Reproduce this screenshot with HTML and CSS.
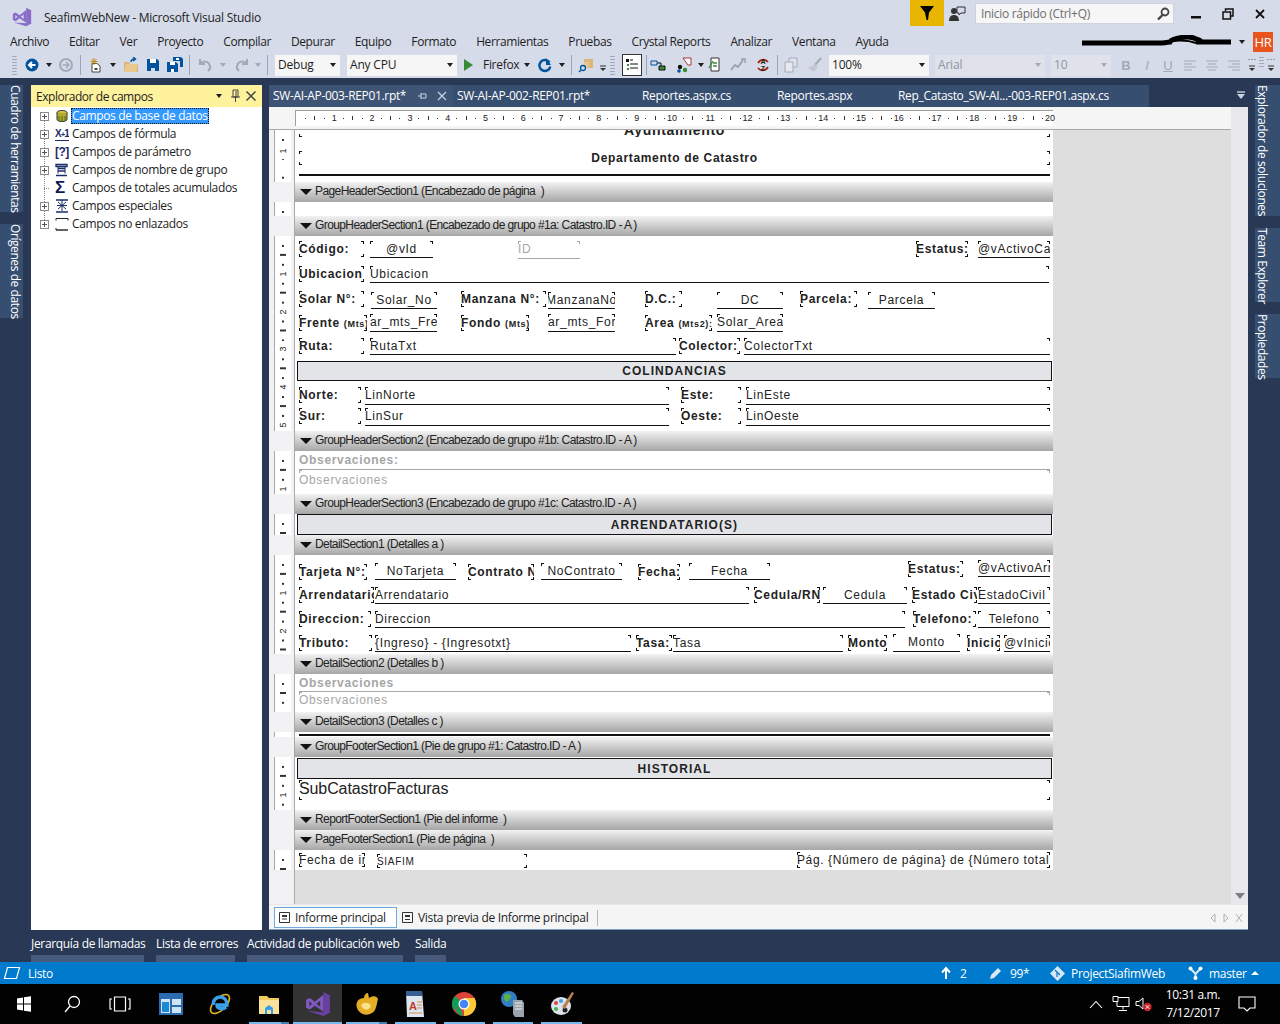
FILE: index.html
```html
<!DOCTYPE html>
<html lang="es">
<head>
<meta charset="utf-8">
<title>SeafimWebNew - Microsoft Visual Studio</title>
<link rel="stylesheet" href="styles.css">
</head>
<body>
<div class="app">
  <header class="titlebar">
    <svg class="vslogo" width="20" height="20" viewBox="0 0 24 24"><path fill="#8a6cc9" d="M17 1l6 3v16l-6 3L2 18.5l15 1z"/><path fill="#8a6cc9" fill-rule="evenodd" d="M1 8l3.500-1.500L9 10l8-6.500V19l-8-5.500L4.500 17 1 15.500zM4 9.500v4.500l2.500-2.300zM10.500 11.800l3.500 2.700V9z"/></svg>
    <span class="apptitle">SeafimWebNew - Microsoft Visual Studio</span>
    <div class="filterbox"><svg width="14" height="14" viewBox="0 0 14 14"><path d="M0 0h14L9 6.500 8 14H6.500L5 6.500z"/></svg></div>
    <svg class="feedback" width="18" height="18" viewBox="0 0 18 18"><circle cx="6" cy="6" r="3" fill="#333"/><path d="M1 16c0-4 2-6 5-6s5 2 5 6z" fill="#333"/><path d="M9 2h8v6h-4l-2 2V8H9z" fill="#d6dbe9" stroke="#333"/></svg>
    <div class="quick"><span>Inicio rápido (Ctrl+Q)</span><svg width="14" height="14" viewBox="0 0 14 14"><circle cx="9" cy="5" r="3.500" fill="none" stroke="#444" stroke-width="1.800"/><path d="M6.500 8L2 12.500" stroke="#444" stroke-width="2.400"/></svg></div>
    <div class="winbtns">
      <svg width="12" height="12" viewBox="0 0 12 12"><rect x="1" y="8" width="10" height="2.500" fill="#111"/></svg>
      <svg width="12" height="12" viewBox="0 0 12 12"><path d="M3.500 3V1h7.500v7H8.500M1 4h7.500v7H1z" fill="none" stroke="#111" stroke-width="1.500"/></svg>
      <svg width="12" height="12" viewBox="0 0 12 12"><path d="M2 2l8 8M10 2l-8 8" stroke="#111" stroke-width="1.800"/></svg>
    </div>
  </header>

  <nav class="menubar">
    <span>Archivo</span><span>Editar</span><span>Ver</span><span>Proyecto</span><span>Compilar</span><span>Depurar</span><span>Equipo</span><span>Formato</span><span>Herramientas</span><span>Pruebas</span><span>Crystal Reports</span><span>Analizar</span><span>Ventana</span><span>Ayuda</span>
    <div class="account">
      <svg width="152" height="14" viewBox="0 0 152 14"><path d="M1 8h80c6 0 4-1 8-1 2-4 20-7 26-3 4 1 8 3 0 3h35" fill="none" stroke="#000" stroke-width="5"/><path d="M83 9c10-5 24-4 32-1" fill="none" stroke="#000" stroke-width="2"/></svg>
      <i class="caret dk"></i>
      <b class="hr">HR</b>
    </div>
  </nav>

  <div class="toolbar">
    <i class="grip"></i>
    <svg class="m7" width="16" height="16" viewBox="0 0 16 16"><circle cx="8" cy="8" r="6.500" fill="#00539c"/><path d="M11.500 8H6M8 5L5 8l3 3" fill="none" stroke="#fff" stroke-width="2"/></svg>
    <i class="caret dk m5"></i>
    <svg class="m5" width="16" height="16" viewBox="0 0 16 16"><circle cx="8" cy="8" r="6" fill="none" stroke="#a3a9b8" stroke-width="2"/><path d="M4.500 8H10M8 5l3 3-3 3" fill="none" stroke="#a3a9b8" stroke-width="1.500"/></svg>
    <i class="sep m6"></i>
    <svg class="m7" width="16" height="16" viewBox="0 0 16 16"><path d="M4 6.500h5l3 2.500v6H4z" fill="#fff" stroke="#444"/><path d="M6 1v7M2.500 4.500h7M3.500 2l5 5M8.500 2l-5 5" stroke="#c08f1c"/><path d="M6.500 11h3v2h-3z" fill="#444"/></svg>
    <i class="caret dk m5"></i>
    <svg class="m6" width="16" height="16" viewBox="0 0 16 16"><path d="M1 5h5l1 2h8v8H1z" fill="#dcb67a"/><path d="M3 7h12l-2 8H1z" fill="#e8c88f"/><path d="M8 5c0-2 2-3 4-3M10 0l2.500 2L10 4" fill="none" stroke="#00539c" stroke-width="1.400"/></svg>
    <svg class="m6" width="16" height="16" viewBox="0 0 16 16"><path d="M2 2h10l2 2v10H2z" fill="#00539c"/><path d="M5 2h6v4H5z" fill="#fff"/><path d="M6 11h4v3H6z" fill="#d6dbe9"/></svg>
    <svg class="m6" width="16" height="16" viewBox="0 0 16 16"><path d="M6 0h8l2 2v8h-3V4H6z" fill="#00539c"/><path d="M0 5h9l2 2v8H0z" fill="#00539c"/><path d="M3 5h5v3H3zM4 12h3v3H4zM9 1h3v2H9z" fill="#fff"/></svg>
    <i class="sep m6"></i>
    <svg class="m7" width="16" height="16" viewBox="0 0 16 16"><path d="M3 2v5h5M3 7c3-4 9-3 10 2 .5 2-.5 4-2 5" fill="none" stroke="#a3a9b8" stroke-width="2"/></svg>
    <i class="caret gr m6"></i>
    <svg class="m7" width="16" height="16" viewBox="0 0 16 16"><path d="M13 2v5H8M13 7C10 3 4 4 3 9c-.5 2 .5 4 2 5" fill="none" stroke="#a3a9b8" stroke-width="2"/></svg>
    <i class="caret gr m4"></i>
    <i class="sep m5"></i>
    <div class="combo m7 w65"><span>Debug</span><i class="caret dk"></i></div>
    <div class="combo m7 w110"><span>Any CPU</span><i class="caret dk"></i></div>
    <svg class="m4" width="14" height="16" viewBox="0 0 14 16"><path d="M3 2l9 6-9 6z" fill="#388a34"/></svg>
    <span class="tbtext m8">Firefox</span>
    <i class="caret dk m4"></i>
    <svg class="m6" width="16" height="16" viewBox="0 0 16 16"><path d="M12.500 5.500a5.500 5.500 0 1 0 .8 4" fill="none" stroke="#00539c" stroke-width="2.400"/><path d="M9 1v7h5z" fill="#00539c"/></svg>
    <i class="caret dk m5"></i>
    <i class="sep m5"></i>
    <svg class="m6" width="16" height="16" viewBox="0 0 16 16"><path d="M6 2h9v9H9V6H6z" fill="#dcb67a"/><path d="M6 5h5v5H6z" fill="#e8c88f"/><circle cx="5" cy="11" r="2.500" fill="none" stroke="#00539c" stroke-width="1.300"/><path d="M3 13l-2 2" stroke="#00539c" stroke-width="1.500"/></svg>
    <svg class="m5" width="8" height="16" viewBox="0 0 8 16"><path d="M1 9h6" stroke="#333"/><path d="M1 11h6l-3 3z" fill="#333"/></svg>
    <i class="grip m3"></i>
    <div class="toggle m7"><svg width="14" height="14" viewBox="0 0 14 14"><path d="M1 1h3v3H1z" fill="#111"/><path d="M5 2h3M5 6h8M5 10h8" stroke="#111"/><path d="M2 6h2v2H2zM2 10h2v2H2z" fill="#388a34"/></svg></div>
    <i class="sep m4"></i>
    <svg class="m3" width="16" height="16" viewBox="0 0 16 16"><path d="M1 4h6v4H1z" fill="none" stroke="#00539c"/><path d="M9 9h6v4H9z" fill="#388a34" stroke="#111"/><path d="M7 6h4v3" fill="none" stroke="#111"/></svg>
    <svg class="m10" width="16" height="16" viewBox="0 0 16 16"><path d="M7 1h8v7h-3z" fill="#fff" stroke="#a33"/><circle cx="4" cy="10" r="2.200" fill="#111"/><circle cx="9" cy="13" r="2.200" fill="#388a34"/><circle cx="3" cy="14" r="1.800" fill="#00539c"/></svg>
    <i class="caret dk m5"></i>
    <svg class="m2" width="16" height="16" viewBox="0 0 16 16"><path d="M4 1h8v13H4z" fill="#fff" stroke="#333"/><path d="M2 11l4-7M6 6h4M6 9h4" stroke="#388a34" stroke-width="1.300"/></svg>
    <svg class="m7" width="16" height="16" viewBox="0 0 16 16"><path d="M1 13l4-5 3 2 5-7" fill="none" stroke="#9ba2b2" stroke-width="2"/><path d="M11 2h4v4" fill="none" stroke="#9ba2b2" stroke-width="1.500"/></svg>
    <svg class="m9" width="16" height="16" viewBox="0 0 16 16"><path d="M3 6a6 6 0 0 1 10-1M13 10a6 6 0 0 1-10 1" fill="none" stroke="#a1260d" stroke-width="1.800"/><text x="8" y="7" class="azt">A</text><text x="8" y="14" class="azt">Z</text></svg>
    <i class="sep m6"></i>
    <svg class="m5" width="16" height="16" viewBox="0 0 16 16"><path d="M6 1h8v9H6z" fill="#e0e3ea" stroke="#a3a9b8"/><path d="M2 5h8v10H2z" fill="#e8e9ee" stroke="#a3a9b8"/></svg>
    <svg class="m8" width="16" height="16" viewBox="0 0 16 16"><path d="M14 1L8 8" stroke="#a3a9b8" stroke-width="2"/><path d="M8 7l3 3-4 5-6-4z" fill="#c4c8d2"/></svg>
    <div class="combo m6 w100"><span>100%</span><i class="caret dk"></i></div>
    <div class="combo off m6 w110"><span>Arial</span><i class="caret gr"></i></div>
    <div class="combo off m6 w60"><span>10</span><i class="caret gr"></i></div>
    <b class="fmt m8">B</b><em class="fmt m7">I</em><u class="fmt m7">U</u>
    <svg class="m8" width="14" height="12" viewBox="0 0 14 12"><path d="M1 2h12M1 5h8M1 8h12M1 11h8" stroke="#a3a9b8"/></svg>
    <svg class="m8" width="14" height="12" viewBox="0 0 14 12"><path d="M1 2h12M3 5h8M1 8h12M3 11h8" stroke="#a3a9b8"/></svg>
    <svg class="m8" width="14" height="12" viewBox="0 0 14 12"><path d="M1 2h12M5 5h8M1 8h12M5 11h8" stroke="#a3a9b8"/></svg>
    <svg class="m7" width="8" height="16" viewBox="0 0 8 16"><path d="M1 2v1M4 2v1M7 2v1" stroke="#555"/><path d="M1 9h6" stroke="#333"/><path d="M1 11h6l-3 3z" fill="#333"/></svg>
    <i class="grip short m3"></i>
    <svg class="m3" width="8" height="16" viewBox="0 0 8 16"><path d="M1 2v1M4 2v1M7 2v1" stroke="#555"/><path d="M1 9h6" stroke="#333"/><path d="M1 11h6l-3 3z" fill="#333"/></svg>
  </div>

  <main class="main">
    <aside class="leftstrip">
      <div class="vtab t1"><span>Cuadro de herramientas</span></div>
      <div class="vtab t2"><span>Orígenes de datos</span></div>
    </aside>

    <section class="panel">
      <div class="panelhead">
        <span>Explorador de campos</span>
        <i class="caret dk headcaret"></i>
        <svg width="12" height="14" viewBox="0 0 12 14"><path d="M4 1h5v7H4zM2 8h9M6.500 8v5M7 2v6" fill="none" stroke="#444"/></svg>
        <svg width="12" height="12" viewBox="0 0 12 12"><path d="M1.500 1.500l9 9M10.500 1.500l-9 9" stroke="#444" stroke-width="1.500"/></svg>
      </div>
      <ul class="tree">
        <li><i class="exp"></i><svg class="ticon" width="14" height="14" viewBox="0 0 14 14"><ellipse cx="7" cy="3.500" rx="5" ry="2" fill="#e5d34e" stroke="#333"/><path d="M2 3.500v7c0 1 2 2 5 2s5-1 5-2v-7" fill="#b5a92d" stroke="#333"/><path d="M4 7v5M7 7v6M10 7v5" stroke="#3c6e25"/></svg><span class="tlabel sel">Campos de base de datos</span></li>
        <li><i class="exp"></i><span class="ticon tx xp">X<small>+</small>1</span><span class="tlabel">Campos de fórmula</span></li>
        <li><i class="exp"></i><span class="ticon tx">[?]</span><span class="tlabel">Campos de parámetro</span></li>
        <li><i class="exp"></i><svg class="ticon" width="14" height="14" viewBox="0 0 14 14"><path d="M1 1.500h11v2H1zM3 5.500h7M3 8h7M1 12.500h11" fill="none" stroke="#1a2c66" stroke-width="1.300"/><path d="M3 3.500v7M10 3.500v7" stroke="#1a2c66"/></svg><span class="tlabel">Campos de nombre de grupo</span></li>
        <li class="noexp"><i class="noexpbox"></i><span class="ticon tx sigma">Σ</span><span class="tlabel">Campos de totales acumulados</span></li>
        <li><i class="exp"></i><svg class="ticon" width="14" height="14" viewBox="0 0 14 14"><path d="M7 1v11M2 6.500h10M3 3l8 7M11 3l-8 7" stroke="#1a2c66"/><path d="M1 1h12M1 13h12" stroke="#1a2c66" stroke-width="1.300"/></svg><span class="tlabel">Campos especiales</span></li>
        <li><i class="exp"></i><svg class="ticon" width="14" height="14" viewBox="0 0 14 14"><path d="M1 13h12" stroke="#222" stroke-width="1.400"/><path d="M1 1.500h12M13 1.500v2M1 1.500v2M1 11v2" fill="none" stroke="#222"/></svg><span class="tlabel">Campos no enlazados</span></li>
      </ul>
    </section>

    <section class="editor">
      <div class="tabs">
        <div class="tab active w184"><span>SW-AI-AP-003-REP01.rpt*</span><svg class="pin" width="10" height="10" viewBox="0 0 10 10"><path d="M3 2v6M3 3h5v4H3M0 5h3" fill="none" stroke="#c9d3e4"/></svg><svg class="tabx" width="10" height="10" viewBox="0 0 10 10"><path d="M1 1l8 8M9 1L1 9" stroke="#c9d3e4" stroke-width="1.200"/></svg></div>
        <div class="tab w185"><span>SW-AI-AP-002-REP01.rpt*</span></div>
        <div class="tab w135"><span>Reportes.aspx.cs</span></div>
        <div class="tab w121"><span>Reportes.aspx</span></div>
        <div class="tab w255"><span>Rep_Catasto_SW-AI...-003-REP01.aspx.cs</span></div>
        <svg class="taboverflow" width="10" height="10" viewBox="0 0 10 10"><path d="M1 2h8" stroke="#c9d3e4" stroke-width="1.400"/><path d="M1 4h8L5 9z" fill="#c9d3e4"/></svg>
      </div>
      <div class="edbody">
        <div class="surface">
          <div class="hruler-row">
            <div class="hruler">
              <span>1</span><span>2</span><span>3</span><span>4</span><span>5</span><span>6</span><span>7</span><span>8</span><span>9</span><span>10</span><span>11</span><span>12</span><span>13</span><span>14</span><span>15</span><span>16</span><span>17</span><span>18</span><span>19</span><span>20</span>
            </div>
          </div>

          <div class="row">
            <div class="rul"><div class="vr h52"><b class="d d1first">1</b></div></div>
            <div class="body h52">
              <div class="f lb ctr title f-ayu"><span>Ayuntamiento</span></div>
              <div class="f lb ctr f-depto"><span>Departamento de Catastro</span></div>
              <div class="hline f-hl1"></div>
            </div>
          </div>

          <div class="row"><div class="rul"></div><div class="bar"><i></i>PageHeaderSection1 (Encabezado de página &nbsp;)</div></div>
          <div class="row"><div class="rul"><div class="vr h14"></div></div><div class="body h14"></div></div>

          <div class="row"><div class="rul"></div><div class="bar"><i></i>GroupHeaderSection1 (Encabezado de grupo #1a: Catastro.ID - A )</div></div>
          <div class="row">
            <div class="rul"><div class="vr h195"><b class="d d1">1</b><b class="d d2">2</b><b class="d d3">3</b><b class="d d4">4</b><b class="d d5">5</b></div></div>
            <div class="body h195">
              <div class="f lb a1">Código:</div><div class="f v ctr a2"><span>@vId</span></div>
              <div class="f v off a3">ID</div>
              <div class="f lb a4">Estatus:</div><div class="f v a5">@vActivoCa</div>
              <div class="f lb b1">Ubicacion</div><div class="f v b2">Ubicacion</div>
              <div class="f lb c1">Solar N°:</div><div class="f v ctr c2"><span>Solar_No</span></div>
              <div class="f lb c3">Manzana N°:</div><div class="f v ctr c4"><span>ManzanaNo</span></div>
              <div class="f lb c5">D.C.:</div><div class="f v ctr c6"><span>DC</span></div>
              <div class="f lb c7">Parcela:</div><div class="f v ctr c8"><span>Parcela</span></div>
              <div class="f lb d1f">Frente <small>(Mts)</small></div><div class="f v d2f">ar_mts_Fre</div>
              <div class="f lb d3f">Fondo <small>(Mts)</small></div><div class="f v d4f">ar_mts_For</div>
              <div class="f lb d5f">Area <small>(Mts2):</small></div><div class="f v d6f">Solar_Area</div>
              <div class="f lb e1">Ruta:</div><div class="f v e2">RutaTxt</div>
              <div class="f lb e3">Colector:</div><div class="f v e4">ColectorTxt</div>
              <div class="hbox hb1">COLINDANCIAS</div>
              <div class="f lb g1">Norte:</div><div class="f v g2">LinNorte</div>
              <div class="f lb g3">Este:</div><div class="f v g4">LinEste</div>
              <div class="f lb h1">Sur:</div><div class="f v h2">LinSur</div>
              <div class="f lb h3">Oeste:</div><div class="f v h4">LinOeste</div>
            </div>
          </div>

          <div class="row"><div class="rul"></div><div class="bar"><i></i>GroupHeaderSection2 (Encabezado de grupo #1b: Catastro.ID - A )</div></div>
          <div class="row">
            <div class="rul"><div class="vr h43"><b class="d d1">1</b></div></div>
            <div class="body h43">
              <div class="f lb off nobox i1">Observaciones:</div>
              <div class="f v off i2">Observaciones</div>
            </div>
          </div>

          <div class="row"><div class="rul"></div><div class="bar"><i></i>GroupHeaderSection3 (Encabezado de grupo #1c: Catastro.ID - A )</div></div>
          <div class="row">
            <div class="rul"><div class="vr h21"></div></div>
            <div class="body h21"><div class="hbox hb2">ARRENDATARIO(S)</div></div>
          </div>

          <div class="row"><div class="rul"></div><div class="bar"><i></i>DetailSection1 (Detalles a )</div></div>
          <div class="row">
            <div class="rul"><div class="vr h99"><b class="d d1">1</b><b class="d d2">2</b></div></div>
            <div class="body h99">
              <div class="f lb j1">Tarjeta N°:</div><div class="f v ctr j2"><span>NoTarjeta</span></div>
              <div class="f lb j3">Contrato N</div><div class="f v ctr j4"><span>NoContrato</span></div>
              <div class="f lb j5">Fecha:</div><div class="f v ctr j6"><span>Fecha</span></div>
              <div class="f lb j7">Estatus:</div><div class="f v j8">@vActivoArr</div>
              <div class="f lb k1">Arrendatario</div><div class="f v k2">Arrendatario</div>
              <div class="f lb k3">Cedula/RN</div><div class="f v ctr k4"><span>Cedula</span></div>
              <div class="f lb k5">Estado Civ</div><div class="f v k6">EstadoCivil</div>
              <div class="f lb l1">Direccion:</div><div class="f v l2">Direccion</div>
              <div class="f lb l3">Telefono:</div><div class="f v ctr l4"><span>Telefono</span></div>
              <div class="f lb n1">Tributo:</div><div class="f v n2">{Ingreso} - {Ingresotxt}</div>
              <div class="f lb n3">Tasa:</div><div class="f v n4">Tasa</div>
              <div class="f lb n5">Monto</div><div class="f v ctr n6"><span>Monto</span></div>
              <div class="f lb n7">Inicio</div><div class="f v n8">@vInicio</div>
            </div>
          </div>

          <div class="row"><div class="rul"></div><div class="bar"><i></i>DetailSection2 (Detalles b )</div></div>
          <div class="row">
            <div class="rul"><div class="vr h38"></div></div>
            <div class="body h38">
              <div class="f lb off nobox o1">Observaciones</div>
              <div class="f v off o2">Observaciones</div>
            </div>
          </div>

          <div class="row"><div class="rul"></div><div class="bar"><i></i>DetailSection3 (Detalles c )</div></div>
          <div class="row">
            <div class="rul"><div class="vr h5"></div></div>
            <div class="body h5"><div class="hline f-hl2"></div></div>
          </div>

          <div class="row"><div class="rul"></div><div class="bar"><i></i>GroupFooterSection1 (Pie de grupo #1: Catastro.ID - A )</div></div>
          <div class="row">
            <div class="rul"><div class="vr h53"><b class="d d1">1</b></div></div>
            <div class="body h53">
              <div class="hbox hb3">HISTORIAL</div>
              <div class="f big p1">SubCatastroFacturas</div>
            </div>
          </div>

          <div class="row"><div class="rul"></div><div class="bar"><i></i>ReportFooterSection1 (Pie del informe &nbsp;)</div></div>
          <div class="row"><div class="rul"></div><div class="bar"><i></i>PageFooterSection1 (Pie de página &nbsp;)</div></div>
          <div class="row">
            <div class="rul"><div class="vr h20"></div></div>
            <div class="body h20">
              <div class="f q1">Fecha de ir</div>
              <div class="f tiny q2">SIAFIM</div>
              <div class="f q3">Pág. {Número de página} de {Número total</div>
            </div>
          </div>

          <div class="filler"><div class="rul"></div></div>
        </div>
        <div class="vscroll"><i></i></div>
      </div>
      <div class="edfoot">
        <div class="ftab on"><svg width="11" height="11" viewBox="0 0 11 11"><path d="M.5.500h10v10H.5z" fill="none" stroke="#333"/><path d="M3 7h5" stroke="#333"/><path d="M3 3h5v2H3z" fill="#333"/></svg><span>Informe principal</span></div>
        <div class="ftab"><svg width="11" height="11" viewBox="0 0 11 11"><path d="M.5.500h10v10H.5z" fill="none" stroke="#333"/><path d="M3 3h5v2H3zM3 7h5v1H3z" fill="#333"/></svg><span>Vista previa de Informe principal</span></div>
        <i class="fsep"></i>
        <div class="fnav">
          <svg width="8" height="10" viewBox="0 0 8 10"><path d="M6 1L2 5l4 4z" fill="none" stroke="#b0b0b8"/></svg>
          <svg width="8" height="10" viewBox="0 0 8 10"><path d="M2 1l4 4-4 4z" fill="none" stroke="#b0b0b8"/></svg>
          <svg width="8" height="10" viewBox="0 0 8 10"><path d="M1 1l6 8M7 1L1 9" stroke="#b0b0b8"/></svg>
        </div>
      </div>
    </section>

    <aside class="rightstrip">
      <div class="vtab r1"><span>Explorador de soluciones</span></div>
      <div class="vtab r2"><span>Team Explorer</span></div>
      <div class="vtab r3"><span>Propiedades</span></div>
    </aside>
  </main>

  <div class="dock">
    <div class="dtab w113">Jerarquía de llamadas</div>
    <div class="dtab w79">Lista de errores</div>
    <div class="dtab w156">Actividad de publicación web</div>
    <div class="dtab w31">Salida</div>
  </div>

  <footer class="status">
    <svg width="18" height="14" viewBox="0 0 18 14"><path d="M4.500 1.500h12l-3 11h-12z" fill="none" stroke="#fff" stroke-width="1.200"/></svg>
    <span class="listo">Listo</span>
    <div class="stright">
      <svg width="12" height="14" viewBox="0 0 12 14"><path d="M6 13V3M2 6.500L6 2l4 4.500" fill="none" stroke="#fff" stroke-width="2"/></svg>
      <span class="s2">2</span>
      <svg class="s3" width="12" height="12" viewBox="0 0 12 12"><path d="M0 12l1-4 7-7 3 3-7 7z" fill="#d8e8f5"/></svg>
      <span class="s4">99*</span>
      <svg class="s5" width="15" height="15" viewBox="0 0 15 15"><path d="M7.500 0l7.500 7.500-7.500 7.500L0 7.500z" fill="#d8e8f5"/><path d="M5 4l5 5M7 6v5" stroke="#007acc" stroke-width="1.200"/></svg>
      <span class="s6">ProjectSiafimWeb</span>
      <svg class="s7" width="15" height="14" viewBox="0 0 15 14"><path d="M2.500 2.500L7.500 8l5-5.500M7.500 8v4" fill="none" stroke="#d8e8f5" stroke-width="2"/><circle cx="2.500" cy="2.500" r="2" fill="#fff"/><circle cx="12.500" cy="2.500" r="2" fill="#fff"/><circle cx="7.500" cy="12" r="2" fill="#fff"/></svg>
      <span class="s8">master</span>
      <i class="uptri"></i>
    </div>
  </footer>

  <div class="taskbar">
    <div class="tk w48"><svg width="20" height="20" viewBox="0 0 20 20"><path d="M3 4.500l6-1v6H3zM10 3.300l7-1.100v7.300h-7zM3 10.500h6v6l-6-1zM10 10.500h7v7.300l-7-1.100z" fill="#fff"/></svg></div>
    <div class="tk w48"><svg width="20" height="20" viewBox="0 0 20 20"><circle cx="12" cy="8" r="5.500" fill="none" stroke="#fff" stroke-width="1.300"/><path d="M8 12l-5 6" stroke="#fff" stroke-width="1.300"/></svg></div>
    <div class="tk w48"><svg width="22" height="18" viewBox="0 0 22 18"><path d="M5.500 2h11v14h-11zM3 4H1v10h2M19 4h2v10h-2" fill="none" stroke="#fff" stroke-width="1.200"/></svg></div>
    <div class="tk w49 first"><svg width="24" height="22" viewBox="0 0 24 22"><path d="M0 0h24v22H0z" fill="#2b6cb0"/><path d="M2 6h9v14H2zM13 6h9v6h-9zM13 14h9v6h-9z" fill="#cfe4f7"/><path d="M3 9h7v10H3z" fill="#1b8ad3"/></svg></div>
    <div class="tk w49"><svg width="26" height="26" viewBox="0 0 26 26"><ellipse cx="13" cy="13" rx="12" ry="6" transform="rotate(-45 13 13)" fill="none" stroke="#e6b422" stroke-width="1.600"/><path d="M6 14c0-5 3-8 7-8s7 3 7 8H10c0 4 6 5 9 2" fill="none" stroke="#3aa0e8" stroke-width="3.400"/></svg></div>
    <div class="tk w49 ul split"><svg width="24" height="24" viewBox="0 0 24 24"><path d="M2 4h8l2 2h10v16H2z" fill="#f0c95f"/><path d="M2 8h20v14H2z" fill="#fbe29b"/><path d="M8 22v-6l4-3 4 3v6z" fill="#3aa0e8"/><path d="M10 22v-4h4v4z" fill="#fbe29b"/></svg></div>
    <div class="tk w49 ul vsactive"><svg width="26" height="26" viewBox="0 0 24 24"><path fill="#68409f" d="M17 1l6 3v16l-6 3L2 18.500l15 1z"/><path fill="#7f58c0" fill-rule="evenodd" d="M1 8l3.500-1.500L9 10l8-6.500V19l-8-5.500L4.500 17 1 15.500zM4 9.500v4.500l2.500-2.300zM10.500 11.800l3.500 2.700V9z"/></svg></div>
    <div class="tk w49 ul split"><svg width="26" height="26" viewBox="0 0 26 26"><path d="M3 17c-2-6 2-10 7-10 0-3 2-5 4-5l1 5c4-3 8-2 9 1-2 8-2 13-8 15-6 2-11-1-13-6z" fill="#e5ad26"/><path d="M7 14c3-3 8-3 10 1-2 5-8 5-10-1z" fill="#f9e28a"/></svg></div>
    <div class="tk w49 ul"><svg width="24" height="28" viewBox="0 0 24 28"><path d="M3 1h16l2 26H4z" fill="#dbe6f2"/><path d="M3 1h16v5H3z" fill="#365f91"/><text x="6" y="20" class="docA">A</text><path d="M14 12h5M14 15h5M14 18h5M6 23h13" stroke="#e08a3c"/></svg></div>
    <div class="tk w49 ul"><svg width="26" height="26" viewBox="0 0 26 26"><circle cx="13" cy="13" r="12" fill="#db4437"/><path d="M13 13L2.600 19A12 12 0 0 1 4 5z" fill="#0f9d58"/><path d="M13 7h10.500A12 12 0 0 1 13 25z" fill="#fcc934"/><path d="M4 19l5-3 3 9c-3 0-6-3-8-6z" fill="#0f9d58"/><circle cx="13" cy="13" r="5.500" fill="#fff"/><circle cx="13" cy="13" r="4.300" fill="#4285f4"/></svg></div>
    <div class="tk w49 ul"><svg width="26" height="28" viewBox="0 0 26 28"><circle cx="9" cy="9" r="8" fill="#2f7fc1"/><path d="M4 5c3-2 6-1 7 1s-2 3-3 5-3 0-4-2z" fill="#5fae45"/><path d="M13 10h9l2 3v14h-9l-2-3z" fill="#9aa4ae"/><path d="M15 13h7M15 16h7M15 19h7" stroke="#eee"/></svg></div>
    <div class="tk w49 ul"><svg width="26" height="28" viewBox="0 0 26 28"><ellipse cx="12" cy="16" rx="10" ry="9" fill="#dde3ea"/><circle cx="7" cy="13" r="2" fill="#d64541"/><circle cx="12" cy="11" r="2" fill="#3aa0e8"/><circle cx="7" cy="19" r="2" fill="#4caf50"/><circle cx="16" cy="20" r="2.500" fill="#222"/><path d="M13 17L23 2l2 1-9 16z" fill="#b9824a"/></svg></div>
    <div class="tray">
      <svg width="14" height="9" viewBox="0 0 14 9"><path d="M1 8l6-6.500L13 8" fill="none" stroke="#fff" stroke-width="1.100"/></svg>
      <svg class="tr1" width="18" height="16" viewBox="0 0 18 16"><path d="M5 1.500h12v9H5z" fill="none" stroke="#fff"/><path d="M1 .5h5v5H1z" fill="#000" stroke="#fff"/><path d="M11 10.500v3M7 14.500h8" stroke="#fff"/></svg>
      <svg class="tr2" width="18" height="16" viewBox="0 0 18 16"><path d="M1 5.500h3L8 2v11L4 9.500H1z" fill="none" stroke="#fff"/><circle cx="12.500" cy="11" r="4.200" fill="#c8222a"/><path d="M10.700 9.200l3.600 3.600M14.300 9.200l-3.600 3.600" stroke="#fff"/></svg>
      <div class="clock"><span>10:31 a.m.</span><span>7/12/2017</span></div>
      <svg class="tr3" width="18" height="16" viewBox="0 0 18 16"><path d="M1 1h16v11h-5l-3 3-3-3H1z" fill="none" stroke="#fff" stroke-width="1.100"/></svg>
    </div>
  </div>
</div>
</body>
</html>
```

FILE: styles.css
```css
*{box-sizing:border-box}
html,body{margin:0;padding:0;overflow:hidden}
body{background:#000;font-family:"Open Sans","Noto Sans",sans-serif;font-size:12px;color:#1e1e1e}
i{display:block;font-style:normal}
svg{display:block;flex:none}
.app{width:1280px;height:1024px;display:flex;flex-direction:column;background:#d6dbe9}

/* title bar */
.titlebar{height:32px;display:flex;align-items:flex-start;padding-left:12px;flex:none}
.vslogo{margin-top:7px}
.apptitle{margin:10px 0 0 12px;letter-spacing:-.25px;line-height:16px;width:866px}
.filterbox{width:34px;height:26px;background:#e8b600;display:flex;align-items:center;justify-content:center}
.feedback{margin:5px 0 0 4px}
.quick{margin:3px 0 0 9px;width:199px;height:21px;background:#f6f6f6;border:1px solid #cfd3de;display:flex;align-items:center;justify-content:space-between;padding:0 3px 0 5px;color:#6d6d6d;letter-spacing:-.3px}
.winbtns{display:flex;gap:20px;margin:8px 0 0 16px}

/* menu */
.menubar{height:20px;display:flex;align-items:center;gap:20px;padding:0 0 2px 10px;flex:none;letter-spacing:-.4px}
.account{margin-left:auto;display:flex;align-items:center;gap:5px;margin-right:7px;margin-bottom:-2px}
.hr{width:20px;height:20px;background:#e8541e;color:#fff;font-weight:400;font-size:13px;text-align:center;line-height:20px;margin-left:2px}
.caret{width:8px;height:8px;position:relative;flex:none}
.caret::after{content:"";position:absolute;left:1px;top:2px;border:3px solid transparent;border-top:4px solid #1e1e1e;border-bottom:0}
.caret.gr::after{border-top-color:#a3a9b8}

/* toolbar */
.toolbar{height:26px;display:flex;align-items:center;padding-left:12px;flex:none}
.grip{width:5px;height:20px;background:radial-gradient(circle,#8a93a8 0 .7px,transparent 1px) 0 0/2.500px 3px}
.grip.short{height:12px;margin-top:-6px}
.sep{width:1px;height:20px;background:#9aa3b8}
.combo{height:21px;background:#f6f6f6;display:flex;align-items:center;justify-content:space-between;padding:0 3px 1px 3px;letter-spacing:-.2px;flex:none}
.combo.off{background:#dfe2ea;color:#8f95a3}
.w65{width:65px}.w110{width:110px}.w100{width:100px}.w60{width:60px}
.tbtext{width:36px;letter-spacing:-.3px;white-space:nowrap;margin-top:-1px}
.toggle{width:20px;height:22px;background:#fff;border:1px solid #333;display:flex;align-items:center;justify-content:center;flex:none}
.fmt{width:14px;text-align:center;color:#a3a9b8;font-size:13px;font-family:"Liberation Sans",sans-serif;flex:none}
.azt{font:bold 7px "Liberation Sans",sans-serif;text-anchor:middle;fill:#1e1e1e}
.m2{margin-left:2px}.m3{margin-left:3px}.m4{margin-left:4px}.m5{margin-left:5px}.m6{margin-left:6px}.m7{margin-left:7px}.m8{margin-left:8px}.m9{margin-left:9px}.m10{margin-left:10px}

/* main */
.main{height:852px;flex:none;display:flex;background:#293955;padding-top:7px}
.leftstrip{width:31px;flex:none;display:flex;flex-direction:column}
.rightstrip{width:32px;flex:none;display:flex;flex-direction:column;padding-left:7px}
.vtab{background:#364e6f;color:#fff;writing-mode:vertical-rl;display:flex;justify-content:flex-start;letter-spacing:-.42px;line-height:15px;white-space:nowrap}
.vtab span{display:block}
.t1{width:23px;height:127px;align-items:flex-start}
.t2{width:23px;height:94px;margin-top:12px;align-items:flex-start}
.r1,.r2,.r3{align-items:flex-end}
.r1{height:131px}.r2{height:74px;margin-top:12px}.r3{height:64px;margin-top:12px}

/* panel */
.panel{width:231px;flex:none;background:#fff;display:flex;flex-direction:column}
.panelhead{height:22px;background:#fff29d;display:flex;align-items:center;padding:0 5px;flex:none}
.panelhead span{width:179px;padding-top:1px;letter-spacing:-.45px}
.headcaret{margin-right:4px}
.panelhead svg{margin-left:2px}
.panelhead svg+svg{margin-left:4px}
.tree{list-style:none;margin:0;padding:0;position:relative}
.tree::before{content:"";position:absolute;left:13px;top:9px;bottom:9px;border-left:1px dotted #888}
.tree li{height:18px;display:flex;align-items:center;padding-left:9px;position:relative}
.exp{width:9px;height:9px;border:1px solid #8a8a8a;background:linear-gradient(#555,#555) center/5px 1px no-repeat,linear-gradient(#555,#555) center/1px 5px no-repeat,#fff;position:relative;flex:none}
.noexpbox{height:1px;border-top:1px dotted #888;flex:none;margin-left:4px;width:5px}
.ticon{margin-left:6px;width:14px;flex:none}
.tx{font:bold 12px/14px "Liberation Sans",sans-serif;color:#1a2c66;white-space:nowrap;letter-spacing:-.6px}
.xp{font-size:10px;border-bottom:1px solid #1a2c66;line-height:11px;letter-spacing:-.8px;overflow:hidden}
.xp small{font-size:7px}
.sigma{font-size:17px;line-height:16px;color:#0c1a52;letter-spacing:0}
.tlabel{margin-left:2px;padding:0 1px;letter-spacing:-.36px;line-height:16px;white-space:nowrap}
.tlabel.sel{background:#3399ff;color:#fff;outline:1px dotted #111;outline-offset:-1px}

/* editor */
.editor{width:979px;flex:none;display:flex;flex-direction:column;margin-left:7px}
.tabs{height:22px;flex:none;display:flex;align-items:center;position:relative;background:#293955;color:#fff;letter-spacing:-.33px}
.tab{height:22px;background:#364e6f;display:flex;align-items:center;padding:0 0 1px 4px;flex:none;white-space:nowrap}
.tab.active{background:#3e5475}
.w184{width:184px}.w185{width:185px}.w135{width:135px}.w121{width:121px}.w255{width:255px}
.tab span{width:136px;flex:none}
.pin{margin-left:9px}
.tabx{margin-left:9px}
.taboverflow{position:absolute;right:2px;top:5px}
.edbody{flex:1;display:flex;min-height:0}
.surface{width:962px;flex:none;background:#dedede;display:flex;flex-direction:column;overflow:hidden}
.vscroll{width:17px;flex:none;background:#e8e8ec;position:relative}
.vscroll i{position:absolute;left:4px;bottom:5px;border:5px solid transparent;border-top:6px solid #7b7f8a;border-bottom:0}
.hruler-row{height:23px;flex:none;background:#f5f5f5;padding:3px 0 0 26px;border-bottom:1px solid #a8a8a8;position:relative}
.hruler{width:758px;height:16px;background-color:#fff;border-top:1px solid #9e9e9e;border-left:1px solid #9e9e9e;display:flex;background-repeat:no-repeat;
  background-image:repeating-linear-gradient(90deg,transparent 0 8.950px,#333 8.950px 9.950px,transparent 9.950px 18.900px),repeating-linear-gradient(90deg,transparent 0 18.400px,#333 18.400px 19.400px,transparent 19.400px 37.800px);background-size:100% 1px,100% 4px;background-position:0 7px,0 5px}
.hruler span{width:37.8px;flex:none;text-align:right;font:9px/14px "Liberation Sans",sans-serif;color:#222;position:relative;left:3px}
.row{display:flex;flex:none}
.rul{width:26px;flex:none;background:#f2f2f4;border-right:1px solid #a8a8a8;padding-left:5px}
.vr{width:17px;background-color:#fff;border-left:1px solid #a8a8a8;position:relative;overflow:hidden;
  background-image:linear-gradient(transparent 8.500px,#333 8.500px,#333 10.500px,transparent 10.500px),linear-gradient(transparent 18px,#333 18px,#333 19.500px,transparent 19.500px);
  background-size:2px 18.900px,6px 37.800px;background-repeat:repeat-y;background-position:7px 0,5px 0}
.d{position:absolute;left:0;width:16px;height:12px;font:400 9px/12px "Liberation Sans",sans-serif;color:#222;text-align:center;transform:rotate(-90deg);background:#fff}
.d1first{top:15px}
.d1{top:32px}.d2{top:70px}.d3{top:107px}.d4{top:145px}.d5{top:183px}
.filler{flex:1;display:flex}
.body{width:758px;background:#fff;position:relative;overflow:hidden;flex:none;font-family:"Liberation Sans",sans-serif}
.h52{height:52px}.h14{height:14px}.h195{height:195px}.h43{height:43px}.h21{height:21px}.h99{height:99px}.h38{height:38px}.h5{height:5px}.h53{height:53px}.h20{height:20px}
.bar{width:758px;height:20px;flex:none;background:linear-gradient(#f2f2f2,#a6a6a6);display:flex;align-items:center;font:12px/18px "Liberation Sans",sans-serif;letter-spacing:-.6px;color:#222;padding:0 0 3px 5px;white-space:nowrap}
.bar i{border:6px solid transparent;border-top:6px solid #111;border-bottom:0;margin-right:3px;flex:none;margin-top:3px}

/* report fields: free placement on the design surface */
.f{--c:#111;position:absolute;height:16px;line-height:16px;white-space:nowrap;overflow:hidden;letter-spacing:.68px;color:#222;font-size:12px;
  background:
    linear-gradient(var(--c),var(--c)) 0 0/3px 1px no-repeat,linear-gradient(var(--c),var(--c)) 0 0/1px 3px no-repeat,
    linear-gradient(var(--c),var(--c)) 100% 0/3px 1px no-repeat,linear-gradient(var(--c),var(--c)) 100% 0/1px 3px no-repeat,
    linear-gradient(var(--c),var(--c)) 0 100%/3px 1px no-repeat,linear-gradient(var(--c),var(--c)) 0 100%/1px 3px no-repeat,
    linear-gradient(var(--c),var(--c)) 100% 100%/3px 1px no-repeat,linear-gradient(var(--c),var(--c)) 100% 100%/1px 3px no-repeat}
.lb{font-weight:700}
.lb small{font-size:9px}
.v{border-bottom:1px solid #111;height:17px;background:
    linear-gradient(var(--c),var(--c)) 0 0/3px 1px no-repeat,linear-gradient(var(--c),var(--c)) 0 0/1px 3px no-repeat,
    linear-gradient(var(--c),var(--c)) 100% 0/3px 1px no-repeat,linear-gradient(var(--c),var(--c)) 100% 0/1px 3px no-repeat}
.ctr{display:flex;justify-content:center}
.ctr span{flex:none}
.off{--c:#a8a8a8;color:#a6a6a6;border-bottom-color:#a8a8a8}
.nobox{background:none}
.title{font-size:14px}
.big{font-size:16px;letter-spacing:-.1px;height:20px;line-height:17px}
.tiny{font-size:10px;letter-spacing:.7px}
.hline{position:absolute;background:#111}
.hbox{position:absolute;left:2px;width:755px;height:20px;background:#e3e4e8;border:1px solid #111;text-align:center;font:700 12px/18px "Liberation Sans",sans-serif;letter-spacing:1.050px;color:#222}
.hb1{top:125px}.hb2{top:0;height:21px;line-height:20px}.hb3{top:1px;height:21px;line-height:20px}

.f-ayu{left:4px;top:-8px;width:751px;height:15px}
.f-depto{left:4px;top:21px;width:751px;height:14px;line-height:14px}
.f-hl1{left:4px;top:44px;width:751px;height:2px}
.f-hl2{left:4px;top:2px;width:751px;height:2px}

.a1{left:4px;top:5px;width:65px}.a2{left:75px;top:5px;width:63px}.a3{left:223px;top:5px;width:62px;height:18px}.a4{left:621px;top:5px;width:52px}.a5{left:683px;top:5px;width:72px}
.b1{left:4px;top:30px;width:65px}.b2{left:75px;top:30px;width:679px}
.c1{left:4px;top:55px;width:65px}.c2{left:76px;top:56px;width:66px}.c3{left:166px;top:55px;width:85px}.c4{left:253px;top:56px;width:67px}.c5{left:350px;top:55px;width:37px}.c6{left:422px;top:56px;width:66px}.c7{left:505px;top:55px;width:57px}.c8{left:573px;top:56px;width:67px}
.d1f{left:4px;top:79px;width:68px}.d2f{left:75px;top:78px;width:67px;height:18px}.d3f{left:166px;top:79px;width:68px}.d4f{left:253px;top:78px;width:67px;height:18px}.d5f{left:350px;top:79px;width:67px}.d6f{left:422px;top:78px;width:66px;height:18px}
.e1{left:4px;top:102px;width:65px}.e2{left:75px;top:102px;width:306px}.e3{left:384px;top:102px;width:61px}.e4{left:449px;top:102px;width:306px}
.g1{left:4px;top:151px;width:62px}.g2{left:70px;top:151px;width:304px;height:18px}.g3{left:386px;top:151px;width:60px}.g4{left:451px;top:151px;width:304px;height:18px}
.h1{left:4px;top:172px;width:62px}.h2{left:70px;top:172px;width:304px;height:18px}.h3{left:386px;top:172px;width:60px}.h4{left:451px;top:172px;width:304px;height:18px}
.i1{left:4px;top:1px;width:751px}.i2{left:4px;top:18px;width:751px;border-bottom:0;border-top:1px solid #a8a8a8;height:18px;padding-top:2px}
.j1{left:4px;top:9px;width:68px}.j2{left:80px;top:8px;width:81px}.j3{left:173px;top:9px;width:66px}.j4{left:246px;top:8px;width:81px}.j5{left:343px;top:9px;width:42px}.j6{left:394px;top:8px;width:81px}.j7{left:613px;top:6px;width:55px}.j8{left:683px;top:5px;width:72px}
.k1{left:4px;top:32px;width:75px}.k2{left:80px;top:32px;width:374px}.k3{left:459px;top:32px;width:66px}.k4{left:528px;top:32px;width:84px}.k5{left:617px;top:32px;width:65px}.k6{left:683px;top:32px;width:72px}
.l1{left:4px;top:56px;width:72px}.l2{left:80px;top:56px;width:530px}.l3{left:618px;top:56px;width:63px}.l4{left:683px;top:56px;width:72px}
.n1{left:4px;top:80px;width:73px}.n2{left:80px;top:80px;width:256px}.n3{left:341px;top:80px;width:36px}.n4{left:378px;top:80px;width:170px}.n5{left:553px;top:80px;width:39px}.n6{left:598px;top:79px;width:67px;height:18px}.n7{left:672px;top:80px;width:33px}.n8{left:709px;top:80px;width:46px}
.o1{left:4px;top:1px;width:751px}.o2{left:4px;top:17px;width:751px;border-bottom:0;border-top:1px solid #a8a8a8;height:17px}
.p1{left:4px;top:23px;width:751px}
.q1{left:4px;top:3px;width:66px;height:14px;line-height:15px}.q2{left:82px;top:4px;width:150px;height:14px;line-height:15px}.q3{left:502px;top:2px;width:253px;letter-spacing:.62px}

/* editor footer */
.edfoot{height:26px;flex:none;background:#f5f5f5;border-bottom:1px solid #7f9ec4;display:flex;align-items:stretch;padding:2px 0 0 5px;letter-spacing:-.33px;border-top:1px solid #e8e8ec}
.ftab{display:flex;align-items:center;padding:0 11px 0 4px;gap:5px;white-space:nowrap;margin-bottom:1px}
.ftab.on{background:#fff;border:1px solid #6ea8dc;width:123px}
.ftab:not(.on){width:196px;padding-left:5px}
.fsep{width:1px;height:16px;background:#b5b5b5;margin-top:3px;margin-left:4px}
.fnav{margin-left:auto;display:flex;gap:5px;align-items:center;margin-right:5px}

/* dock */
.dock{height:32px;flex:none;background:#293955;color:#fff;display:flex;gap:12px;padding-left:31px;letter-spacing:-.33px}
.dtab{height:32px;white-space:nowrap;padding-top:5px;line-height:17px;background:linear-gradient(#475a7c,#475a7c) 0 100%/100% 7px no-repeat;flex:none}
.dtab.w113{width:113px}.dtab.w79{width:79px}.dtab.w156{width:156px}.dtab.w31{width:31px}

/* status */
.status{height:22px;flex:none;background:#007acc;color:#fff;display:flex;align-items:center;padding-left:3px;letter-spacing:-.3px}
.listo{margin-left:7px}
.stright{margin-left:auto;display:flex;align-items:center;width:340px}
.s2{margin-left:8px;width:10px}.s3{margin-left:20px}.s4{margin-left:8px;width:20px}.s5{margin-left:20px}.s6{margin-left:6px;width:94px;white-space:nowrap}.s7{margin-left:23px}.s8{margin-left:6px;width:36px}
.uptri{margin-left:6px;border:4px solid transparent;border-bottom:4px solid #fff;border-top:0}

/* taskbar */
.taskbar{height:40px;flex:none;background:#020203;display:flex;color:#fff}
.tk{display:flex;align-items:center;justify-content:center;flex:none;position:relative}
.w48{width:48px}.w49{width:48.8px}
.first{margin-left:3px}
.ul::after{content:"";position:absolute;left:4px;right:4px;bottom:0;height:2px;background:#76b9ed}
.split::before{content:"";position:absolute;right:4px;width:8px;bottom:0;height:2px;background:#3f7fb0;z-index:1}
.vsactive{background:#333}
.vsactive::after{left:0;right:0}
.tray{margin-left:auto;display:flex;align-items:center;padding-right:24px}
.tr1{margin-left:9px}.tr2{margin-left:5px}
.clock{display:flex;flex-direction:column;align-items:center;width:60px;margin-left:10px;line-height:18px;letter-spacing:-.35px}
.tr3{margin-left:15px}
.docA{font:bold 11px "Liberation Sans",sans-serif;fill:#c0392b}
```
